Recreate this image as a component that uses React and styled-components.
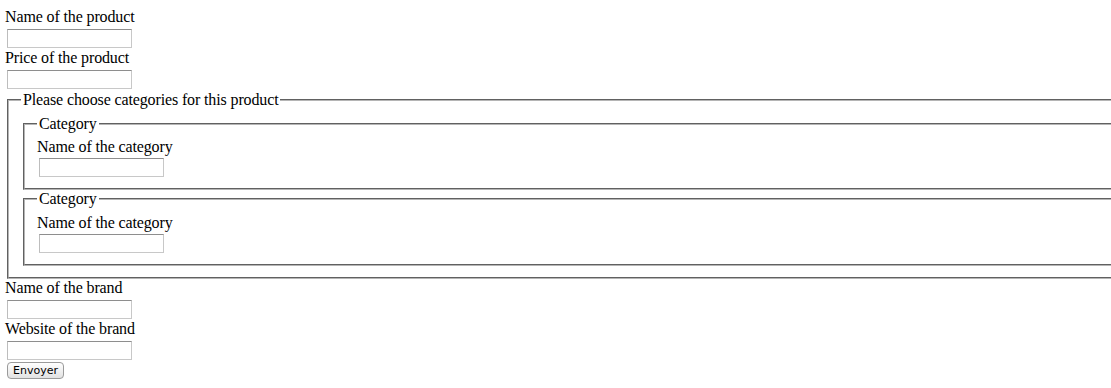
import React from "react";
import styled, { createGlobalStyle } from "styled-components";

const GlobalStyle = createGlobalStyle`
  html, body {
    margin: 0;
    padding: 0;
    background: #fff;
    overflow: hidden;
  }
  body {
    font-family: "Liberation Serif", "Times New Roman", serif;
    font-size: 16px;
    letter-spacing: -0.13px;
    color: #000;
  }
`;

const Form = styled.form`
  padding: 8px 0 0 5px;
  width: 1140px;
`;

const Label = styled.label`
  display: block;
  line-height: 18px;
  height: 18px;
`;

const Input = styled.input`
  display: block;
  box-sizing: border-box;
  width: 125px;
  height: 19px;
  margin: ${(p) => (p.$inner ? "2px 2px 0" : "3px 2px 1px")};
  padding: 0 2px;
  border: 1px solid #c8c8c8;
  border-top-color: #8e8e8e;
  border-left-color: #bdbdbd;
  background: #fff;
  font-size: 13px;
  outline: none;
`;

const Fieldset = styled.fieldset`
  margin: ${(p) => (p.$outer ? "2px 0 0 2px" : "0 0 0 2px")};
  padding: 5.6px 12px 11px;
  border: 2px groove #b5b5b5;
  min-width: 0;
`;

const Legend = styled.legend`
  padding: 0 2px;
  line-height: 18px;
`;

const Button = styled.button`
  display: block;
  box-sizing: border-box;
  margin: 2px 2px 0;
  width: 57px;
  height: 17px;
  padding: 0;
  border: 1px solid #9a9a9a;
  border-radius: 4px;
  background: linear-gradient(#ffffff, #e2e2e2);
  font-family: "DejaVu Sans", "Liberation Sans", sans-serif;
  font-size: 11px;
  letter-spacing: 0;
  line-height: 15px;
  color: #000;
`;

function Field({ label, inner }) {
  return (
    <>
      <Label>{label}</Label>
      <Input type="text" $inner={inner} />
    </>
  );
}

function CategoryBox() {
  return (
    <Fieldset>
      <Legend>Category</Legend>
      <Field label="Name of the category" inner />
    </Fieldset>
  );
}

export default function App() {
  return (
    <>
      <GlobalStyle />
      <Form onSubmit={(e) => e.preventDefault()}>
        <Field label="Name of the product" />
        <Field label="Price of the product" />
        <Fieldset $outer>
          <Legend>Please choose categories for this product</Legend>
          <CategoryBox />
          <CategoryBox />
        </Fieldset>
        <Field label="Name of the brand" />
        <Field label="Website of the brand" />
        <Button type="submit">Envoyer</Button>
      </Form>
    </>
  );
}
